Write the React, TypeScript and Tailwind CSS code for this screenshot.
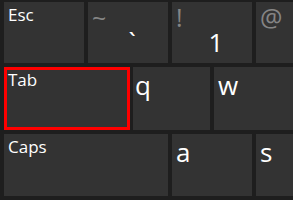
import React from 'react';

const font = { fontFamily: '"Open Sans", "Noto Sans", sans-serif' };

function Key({ w, label, small, shift, base, selected, tight }: { w: string; label?: string; small?: boolean; shift?: string; base?: string; selected?: boolean; tight?: boolean }) {
    return (
        <div className={`${w} h-full shrink-0 bg-[#333333] relative ${selected ? 'border-[3px] border-[#ff0000]' : ''}`}>
            {label && (
                <div className={`absolute leading-none text-white ${small ? 'text-[17px] left-[4px] top-[4px]' : 'text-[26px] top-[5px]'} ${small ? '' : tight ? 'left-[2px]' : 'left-[4px]'} ${selected ? '!left-[1px] !top-[1px]' : ''}`}>
                    {label}
                </div>
            )}
            {shift && (
                <div className="absolute left-[4px] top-[3px] text-[25px] leading-none text-[#858585]">{shift}</div>
            )}
            {base && (
                <div className="absolute left-[8px] right-0 bottom-[8px] text-center text-[26px] leading-none text-white">{base}</div>
            )}
        </div>
    );
}

export default function App() {
    return (
        <div className="w-[293px] h-[200px] overflow-hidden bg-[#1e1e1e] pl-[4px] pt-[2px] flex flex-col" style={font}>
            {/* Number row */}
            <div className="flex gap-[4px] h-[61px]">
                <Key w="w-[80px]" label="Esc" small />
                <Key w="w-[80px]" shift="~" base="`" />
                <Key w="w-[80px]" shift="!" base="1" />
                <Key w="w-[80px]" shift="@" />
            </div>
            {/* Top letter row */}
            <div className="flex h-[63px] mt-[4px]">
                <Key w="w-[126px]" label="Tab" small selected />
                <div className="w-[3px] shrink-0" />
                <Key w="w-[77px]" label="q" tight />
                <div className="w-[4px] shrink-0" />
                <Key w="w-[80px]" label="w" />
            </div>
            {/* Home row */}
            <div className="flex gap-[4px] h-[62px] mt-[4px]">
                <Key w="w-[164px]" label="Caps" small />
                <Key w="w-[80px]" label="a" />
                <Key w="w-[80px]" label="s" />
            </div>
        </div>
    );
}
